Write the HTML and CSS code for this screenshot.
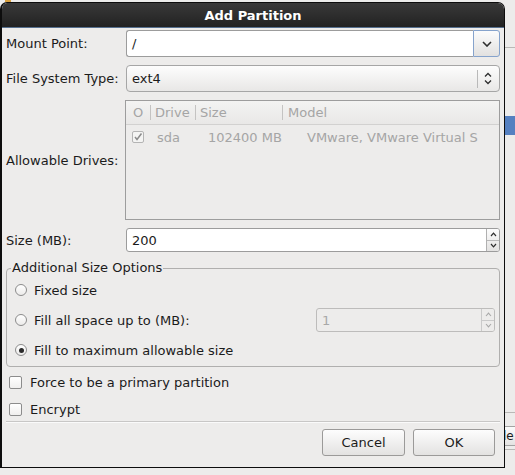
FILE: index.html
```html
<!DOCTYPE html>
<html>
<head>
<meta charset="utf-8">
<link rel="stylesheet" href="styles.css">
</head>
<body>
<div class="desk-icon"></div>
<div class="desk-line l1"></div>
<div class="desk-sel"></div>
<div class="desk-line l2"></div>
<div class="desk-btn">le</div>
<div class="desk-line l3"></div>

<div class="dialog">
  <div class="titlebar">Add Partition</div>
  <div class="content">
    <div class="form">
      <div class="lbl">Mount Point:</div>
      <div class="combo-entry">
        <div class="ce-text">/</div>
        <div class="ce-btn">
          <svg width="10" height="6" viewBox="0 0 10 6"><path d="M1 1 L5 5 L9 1" fill="none" stroke="#2e2e2e" stroke-width="1.6"/></svg>
        </div>
      </div>

      <div class="lbl">File System Type:</div>
      <div class="combo">
        <span class="combo-text">ext4</span>
        <span class="combo-sep"></span>
        <svg class="updown" width="8" height="13" viewBox="0 0 8 13"><path d="M1 4.5 L4 1.5 L7 4.5" fill="none" stroke="#2e2e2e" stroke-width="1.3"/><path d="M1 8.5 L4 11.5 L7 8.5" fill="none" stroke="#2e2e2e" stroke-width="1.3"/></svg>
      </div>

      <div class="lbl">Allowable Drives:</div>
      <div class="tree">
        <div class="tree-head">
          <div class="th c1">O</div>
          <div class="th c2">Drive</div>
          <div class="th c3">Size</div>
          <div class="th c4">Model</div>
        </div>
        <div class="tree-row">
          <div class="td c1"><span class="cb-dis"><svg width="10" height="10" viewBox="0 0 10 10"><path d="M2 5 L4 7.5 L8.5 1.5" fill="none" stroke="#8c8c8c" stroke-width="1.5"/></svg></span></div>
          <div class="td c2">sda</div>
          <div class="td c3">102400 MB</div>
          <div class="td c4">VMware, VMware Virtual S</div>
        </div>
      </div>

      <div class="lbl">Size (MB):</div>
      <div class="spin">
        <div class="spin-text">200</div>
        <div class="spin-btns">
          <span class="sb"><svg width="7" height="5" viewBox="0 0 7 5"><path d="M1 4 L3.5 1.2 L6 4" fill="none" stroke="#2e2e2e" stroke-width="1.2"/></svg></span>
          <span class="sb"><svg width="7" height="5" viewBox="0 0 7 5"><path d="M1 1 L3.5 3.8 L6 1" fill="none" stroke="#2e2e2e" stroke-width="1.2"/></svg></span>
        </div>
      </div>
    </div>

    <fieldset class="frame">
      <legend>Additional Size Options</legend>
      <div class="opt"><span class="radio"></span>Fixed size</div>
      <div class="opt">
        <span class="radio"></span><span>Fill all space up to (MB):</span>
        <div class="spin disabled">
          <div class="spin-text">1</div>
          <div class="spin-btns">
            <span class="sb"><svg width="7" height="5" viewBox="0 0 7 5"><path d="M1 4 L3.5 1.2 L6 4" fill="none" stroke="#a8a8a8" stroke-width="1.1"/></svg></span>
            <span class="sb"><svg width="7" height="5" viewBox="0 0 7 5"><path d="M1 1 L3.5 3.8 L6 1" fill="none" stroke="#a8a8a8" stroke-width="1.1"/></svg></span>
          </div>
        </div>
      </div>
      <div class="opt"><span class="radio on"></span>Fill to maximum allowable size</div>
    </fieldset>

    <div class="check first"><span class="box"></span>Force to be a primary partition</div>
    <div class="check"><span class="box"></span>Encrypt</div>
    <div class="separator"></div>
    <div class="buttons">
      <button class="btn cancel">Cancel</button>
      <button class="btn ok">OK</button>
    </div>
  </div>
</div>
</body>
</html>
```

FILE: styles.css
```css
* { box-sizing: border-box; }
html, body { margin: 0; padding: 0; }
body {
  width: 515px;
  height: 475px;
  overflow: hidden;
  position: relative;
  background: #edeceb;
  font-family: "DejaVu Sans", "Noto Sans", sans-serif;
  font-size: 13px;
  color: #1b1b1b;
}

/* background desktop bits behind the window */
.desk-icon { position: absolute; left: 5px; top: 0; width: 6px; height: 2px; background: #d8a040; }
.desk-line { position: absolute; height: 1px; background: #b9b8b6; }
.desk-line.l1 { left: 500px; width: 15px; top: 47px; }
.desk-line.l2 { left: 500px; width: 15px; top: 412px; }
.desk-line.l3 { left: 500px; width: 15px; top: 449px; }
.desk-sel { position: absolute; left: 0; top: 116px; width: 515px; height: 19px; background: #5580c0; }
.desk-btn {
  position: absolute; left: 496px; top: 426px; width: 19px; height: 20px;
  border: 1px solid #a3a3a3; border-right: none; border-radius: 3px 0 0 3px;
  background: linear-gradient(#fbfbfb, #e4e3e2);
  padding-left: 6px; line-height: 18px; font-size: 12px;
}

/* window */
.dialog {
  position: absolute;
  left: 0;
  top: 2px;
  width: 505px;
  height: 466px;
  border: 1px solid #0d0d0d;
  border-left-width: 2px;
  border-radius: 7px 7px 0 0;
  background: #edeceb;
  display: flex;
  flex-direction: column;
  overflow: hidden;
}
.titlebar {
  height: 25px;
  flex: none;
  background: linear-gradient(#393939, #222222);
  border-bottom: 1px solid #56708f;
  color: #ffffff;
  font-weight: bold;
  font-size: 13px;
  display: flex;
  align-items: center;
  justify-content: center;
  padding-top: 1px;
}
.content {
  flex: 1;
  padding: 2px 4px 0 4px;
  display: flex;
  flex-direction: column;
}

.form {
  display: grid;
  grid-template-columns: 120px 1fr;
  row-gap: 8px;
}
.lbl { align-self: center; white-space: nowrap; }

/* editable combo */
.combo-entry { display: flex; height: 27px; }
.ce-text {
  flex: 1;
  background: #fff;
  border: 1px solid #9c9c9c;
  border-right: none;
  border-radius: 3px 0 0 3px;
  padding-left: 5px;
  display: flex;
  align-items: center;
}
.ce-btn {
  width: 27px;
  border: 1px solid #86a3cc;
  border-radius: 0 3px 3px 0;
  background: linear-gradient(#fcfcfc, #e2e1e0);
  display: flex;
  align-items: center;
  justify-content: center;
}

/* plain combo */
.combo {
  height: 27px;
  border: 1px solid #a6a6a6;
  border-radius: 4px;
  background: linear-gradient(#fdfdfd, #e8e7e6);
  display: flex;
  align-items: center;
  padding-left: 5px;
}
.combo-text { flex: 1; }
.combo-sep { width: 1px; height: 18px; background: #b9b9b9; margin-right: 6px; }
.updown { margin-right: 7px; }

/* tree view */
.tree {
  height: 120px;
  border: 1px solid #9d9d9d;
  background: #edeceb;
  color: #a5a5a5;
  margin-left: -1px;
}
.tree-head {
  height: 24px;
  display: flex;
  border-bottom: 1px solid #d2d1d0;
  background: linear-gradient(#f3f3f2, #e9e8e7);
}
.th { display: flex; align-items: center; position: relative; white-space: nowrap; }
.th.c1, .th.c2, .th.c3 { border-right: 1px solid #c4c3c2; }
.tree-head .th { margin-top: 4px; margin-bottom: 4px; }
.c1 { width: 25px; padding-left: 7px; }
.c2 { width: 45px; padding-left: 4px; }
.c3 { width: 87px; padding-left: 4px; }
.c4 { width: 196px; padding-left: 5px; overflow: hidden; white-space: nowrap; }
.tree-row { height: 24px; display: flex; }
.td { display: flex; align-items: center; white-space: nowrap; }
.td.c1 { padding-left: 6px; }
.td.c2 { padding-left: 6px; }
.td.c3 { padding-left: 12px; }
.td.c4 { padding-left: 24px; }
.cb-dis {
  width: 12px; height: 12px;
  border: 1px solid #b4b4b4;
  border-radius: 2px;
  background: #f4f4f3;
  display: flex; align-items: center; justify-content: center;
}

/* spin button */
.spin { height: 24px; display: flex; background: #fff; border: 1px solid #9c9c9c; border-radius: 3px; }
.spin-text { flex: 1; padding-left: 5px; display: flex; align-items: center; }
.spin-btns {
  width: 13px;
  display: flex;
  flex-direction: column;
  border-left: 1px solid #b0b0b0;
  background: linear-gradient(#fcfcfc, #e3e2e1);
  border-radius: 0 2px 2px 0;
}
.sb { flex: 1; display: flex; align-items: center; justify-content: center; }
.sb + .sb { border-top: 1px solid #b8b8b8; }
.spin.disabled {
  width: 179px;
  margin-left: auto;
  margin-right: 4px;
  background: #edeceb;
  border-color: #bdbcbb;
  color: #a8a8a8;
}
.spin.disabled .spin-btns { background: #edeceb; border-left-color: #cacaca; }
.spin.disabled .sb + .sb { border-top-color: #cacaca; }

/* frame */
.frame {
  margin: 8px 0 0 0;
  padding: 2px 0 4px 0;
  border: 1px solid #b0afae;
  border-radius: 4px;
  display: flex;
  flex-direction: column;
  gap: 6px;
  min-inline-size: 0;
}
.frame legend {
  margin-left: 4px;
  padding: 0 1px;
  line-height: 16px;
}
.opt { height: 24px; display: flex; align-items: center; white-space: nowrap; }
.radio {
  width: 12px; height: 12px;
  border: 1px solid #8c8c8c;
  border-radius: 50%;
  background: linear-gradient(#ffffff, #ecebea);
  margin-left: 8px;
  margin-right: 7px;
  display: inline-flex;
  align-items: center;
  justify-content: center;
  flex: none;
}
.radio.on::after { content: ""; width: 5px; height: 5px; border-radius: 50%; background: #2a2a2a; }

/* check buttons */
.check { height: 22px; display: flex; align-items: center; white-space: nowrap; margin-top: 5px; }
.check.first { margin-top: 4px; }
.box {
  width: 13px; height: 13px;
  border: 1px solid #8c8c8c;
  border-radius: 2px;
  background: linear-gradient(#ffffff, #f0efee);
  margin-left: 3px;
  margin-right: 8px;
  flex: none;
}

.separator { height: 2px; margin-top: 1px; border-top: 1px solid #c8c7c6; border-bottom: 1px solid #fafafa; }

.buttons {
  display: flex;
  justify-content: flex-end;
  gap: 8px;
  margin-top: 6px;
  padding-right: 5px;
}
.btn {
  height: 27px;
  width: 83px;
  border: 1px solid #9b9a99;
  border-radius: 3px;
  background: linear-gradient(#fdfdfd, #e3e2e1);
  font-family: "DejaVu Sans", "Noto Sans", sans-serif;
  font-size: 13px;
  color: #1b1b1b;
  padding: 0;
}
.btn.ok { width: 82px; }
```
